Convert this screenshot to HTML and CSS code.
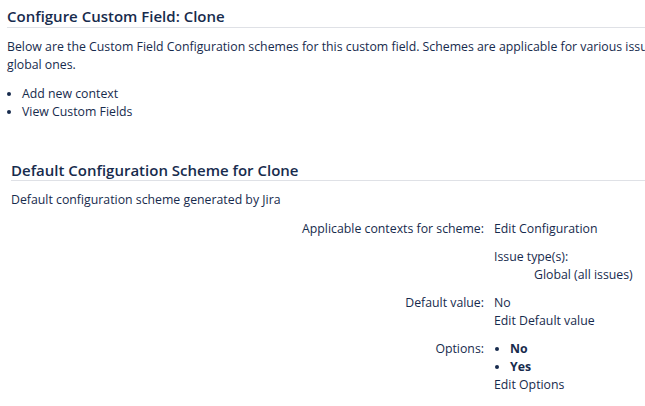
FILE: index.html
```html
<!DOCTYPE html>
<html lang="en">
<head>
<meta charset="utf-8">
<title>Configure Custom Field: Clone</title>
<link rel="stylesheet" href="styles.css">
</head>
<body>
<div class="page">
  <h1 class="page-title">Configure Custom Field: Clone</h1>
  <p class="intro">Below are the Custom Field Configuration schemes for this custom field. Schemes are applicable for various issue types and projects, specific ones override the<br>global ones.</p>
  <ul class="actions">
    <li><a href="#">Add new context</a></li>
    <li><a href="#">View Custom Fields</a></li>
  </ul>

  <section class="scheme">
    <h2 class="scheme-title">Default Configuration Scheme for Clone</h2>
    <p class="scheme-desc">Default configuration scheme generated by Jira</p>
    <div class="config">
      <div class="config-label">Applicable contexts for scheme:</div>
      <div class="config-value">
        <a href="#">Edit Configuration</a>
        <div class="issue-types">
          <div>Issue type(s):</div>
          <div class="issue-type">Global (all issues)</div>
        </div>
      </div>

      <div class="config-label">Default value:</div>
      <div class="config-value">
        <div>No</div>
        <a href="#">Edit Default value</a>
      </div>

      <div class="config-label">Options:</div>
      <div class="config-value">
        <ul class="options">
          <li><strong>No</strong></li>
          <li><strong>Yes</strong></li>
        </ul>
        <a href="#">Edit Options</a>
      </div>
    </div>
  </section>
</div>
</body>
</html>
```

FILE: styles.css
```css
html, body {
  margin: 0;
  padding: 0;
  overflow: hidden;
  background: #fff;
}

body {
  font-family: "Open Sans", "Noto Sans", sans-serif;
  font-size: 12.3px;
  line-height: 18px;
  color: #172b4d;
}

a {
  color: #172b4d;
  text-decoration: none;
}

.page {
  width: 1000px;
  padding-left: 7px;
}

.page-title {
  margin: 6px 0 0;
  padding-bottom: 1px;
  font-size: 15px;
  line-height: 20px;
  font-weight: 600;
  border-bottom: 1px solid #dfe1e6;
}

.intro {
  margin: 10px 0 0;
}

.actions {
  margin: 11px 0 0;
  padding-left: 15px;
}

.scheme {
  margin: 39px 0 0 4px;
}

.scheme-title {
  margin: 0;
  padding-bottom: 0;
  font-size: 15px;
  line-height: 20px;
  font-weight: 600;
  border-bottom: 1px solid #dfe1e6;
}

.scheme-desc {
  margin: 10px 0 0;
}

.config {
  display: grid;
  grid-template-columns: 473px auto;
  column-gap: 10px;
  row-gap: 10px;
  margin-top: 11px;
}

.config-label {
  text-align: right;
}

.config-value a {
  display: block;
}

.issue-types {
  margin-top: 10px;
}

.issue-type {
  padding-left: 40px;
}

.options {
  margin: 0;
  padding-left: 16px;
}
```
